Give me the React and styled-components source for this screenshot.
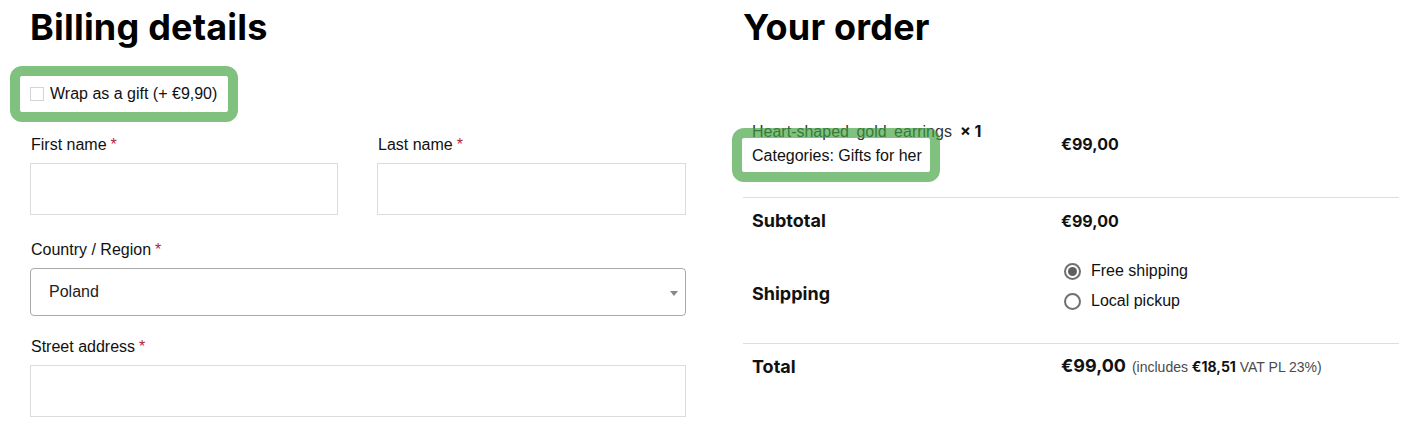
import React from "react";
import styled, { createGlobalStyle } from "styled-components";

const Global = createGlobalStyle`
  html, body { margin: 0; padding: 0; background: #fff; }
  body { font-family: "Liberation Sans", Arial, sans-serif; color: #111; font-size: 16px; }
  * { box-sizing: border-box; }
`;

const Page = styled.div`
  display: grid;
  grid-template-columns: 656px 656px;
  column-gap: 57px;
  padding: 5px 0 0 30px;
  width: 1409px;
  height: 427px;
  overflow: hidden;
`;

const Column = styled.section`
  display: flex;
  flex-direction: column;
`;

const Heading = styled.h2`
  margin: 0;
  font-family: Inter, "Liberation Sans", sans-serif;
  font-weight: 700;
  font-size: 36px;
  line-height: 44px;
  letter-spacing: 0.2px;
  color: #000;
`;

const Highlight = styled.div`
  position: absolute;
  left: ${(p) => p.$left}px;
  top: ${(p) => p.$top}px;
  width: ${(p) => p.$w}px;
  height: ${(p) => p.$h}px;
  border: 10px solid rgba(60, 160, 60, 0.65);
  border-radius: 12px;
  pointer-events: none;
`;

const GiftRow = styled.label`
  position: relative;
  display: flex;
  align-items: center;
  gap: 6px;
  margin-top: 33px;
  height: 24px;
  line-height: 24px;
  font-size: 16px;
  color: #111;
`;

const Checkbox = styled.span`
  width: 14px;
  height: 14px;
  border: 1px solid #d4d4d4;
  background: #fff;
  flex: none;
`;

const FieldRow = styled.div`
  display: grid;
  grid-template-columns: ${(p) => (p.$split ? "308px 309px" : "656px")};
  column-gap: 39px;
  margin-top: ${(p) => p.$mt}px;
`;

const Field = styled.div`
  display: flex;
  flex-direction: column;
`;

const Label = styled.label`
  font-size: 16px;
  line-height: 24px;
  color: #111;
  margin-left: 1px;
  margin-bottom: 6px;
`;

const Req = styled.span`
  color: #b0243a;
  margin-left: 4px;
`;

const Input = styled.div`
  height: 52px;
  border: 1px solid #dcdcdc;
  background: #fff;
`;

const Select = styled.div`
  position: relative;
  height: 48px;
  border: 1px solid #aaa;
  border-radius: 4px;
  display: flex;
  align-items: center;
  padding-left: 18px;
  font-size: 16px;
  color: #222;
`;

const Arrow = styled.span`
  position: absolute;
  right: 7px;
  top: 22px;
  width: 0;
  height: 0;
  border-left: 4px solid transparent;
  border-right: 4px solid transparent;
  border-top: 5px solid #888;
`;

const Table = styled.div`
  display: flex;
  flex-direction: column;
  margin-top: 40px;
  width: 656px;
`;

const Row = styled.div`
  position: relative;
  display: grid;
  grid-template-columns: 309px 1fr;
  align-items: center;
  padding: ${(p) => p.$pad || "11px 0"};
  border-top: ${(p) => (p.$line ? "1px solid #ddd" : "none")};
`;

const Cell = styled.div`
  padding: 0 9px;
  line-height: 24px;
  font-family: ${(p) =>
    p.$bold ? 'Inter, "Liberation Sans", sans-serif' : '"Liberation Sans", Arial, sans-serif'};
  font-weight: ${(p) => (p.$bold ? 700 : 400)};
  font-size: ${(p) => p.$size || 16}px;
  color: #111;
  align-self: ${(p) => p.$align || "center"};
`;

const ProductName = styled.div`
  font-family: "Liberation Sans", Arial, sans-serif;
  font-size: 16px;
  line-height: 24px;
  word-spacing: 3px;
  color: #333;
`;

const Qty = styled.strong`
  font-family: Inter, "Liberation Sans", sans-serif;
  font-weight: 700;
  font-size: 16px;
  word-spacing: 0;
  color: #111;
  margin-left: 8px;
`;

const Meta = styled.div`
  font-family: "Liberation Sans", Arial, sans-serif;
  font-size: 16px;
  line-height: 24px;
  color: #111;
`;

const RadioList = styled.div`
  display: flex;
  flex-direction: column;
  gap: 6px;
  padding: 15px 3px 30px;
`;

const RadioItem = styled.div`
  display: flex;
  align-items: center;
  gap: 10px;
  font-family: "Liberation Sans", Arial, sans-serif;
  font-weight: 400;
  font-size: 16px;
  line-height: 24px;
  color: #111;
`;

const Radio = styled.span`
  width: 17px;
  height: 17px;
  border-radius: 50%;
  border: 2px solid #707070;
  display: flex;
  align-items: center;
  justify-content: center;
  flex: none;
  &::after {
    content: "";
    width: 9px;
    height: 9px;
    border-radius: 50%;
    background: ${(p) => (p.$checked ? "#5f5f5f" : "transparent")};
  }
`;

const Includes = styled.small`
  font-family: "Liberation Sans", Arial, sans-serif;
  font-weight: 400;
  font-size: 14px;
  color: #4a4a4a;
  margin-left: 6px;
  strong {
    font-family: Inter, "Liberation Sans", sans-serif;
    font-weight: 700;
    color: #111;
  }
`;

export default function App() {
  return (
    <>
      <Global />
      <Page>
        <Column>
          <Heading>Billing details</Heading>
          <GiftRow>
            <Highlight $left={-20} $top={-16} $w={228} $h={56} />
            <Checkbox />
            Wrap as a gift (+ €9,90)
          </GiftRow>
          <FieldRow $split $mt={27}>
            <Field>
              <Label>
                First name<Req>*</Req>
              </Label>
              <Input />
            </Field>
            <Field>
              <Label>
                Last name<Req>*</Req>
              </Label>
              <Input />
            </Field>
          </FieldRow>
          <FieldRow $mt={23}>
            <Field>
              <Label>
                Country / Region<Req>*</Req>
              </Label>
              <Select>
                Poland
                <Arrow />
              </Select>
            </Field>
          </FieldRow>
          <FieldRow $mt={19}>
            <Field>
              <Label>
                Street address<Req>*</Req>
              </Label>
              <Input />
            </Field>
          </FieldRow>
        </Column>
        <Column>
          <Heading>Your order</Heading>
          <Table>
            <Row $pad="30px 0 29px">
              <Cell>
                <ProductName>
                  Heart-shaped gold earrings<Qty>× 1</Qty>
                </ProductName>
                <Meta>Categories: Gifts for her</Meta>
              </Cell>
              <Cell $bold>€99,00</Cell>
              <Highlight $left={-11} $top={39} $w={208} $h={54} />
            </Row>
            <Row $line>
              <Cell $bold $size={18}>Subtotal</Cell>
              <Cell $bold>€99,00</Cell>
            </Row>
            <Row $pad="0">
              <Cell $bold $size={18}>Shipping</Cell>
              <Cell $align="start">
                <RadioList>
                  <RadioItem>
                    <Radio $checked />
                    Free shipping
                  </RadioItem>
                  <RadioItem>
                    <Radio />
                    Local pickup
                  </RadioItem>
                </RadioList>
              </Cell>
            </Row>
            <Row $line $pad="10px 0 12px">
              <Cell $bold $size={18}>Total</Cell>
              <Cell $bold $size={18}>
                €99,00
                <Includes>
                  (includes <strong>€18,51</strong> VAT PL 23%)
                </Includes>
              </Cell>
            </Row>
          </Table>
        </Column>
      </Page>
    </>
  );
}
